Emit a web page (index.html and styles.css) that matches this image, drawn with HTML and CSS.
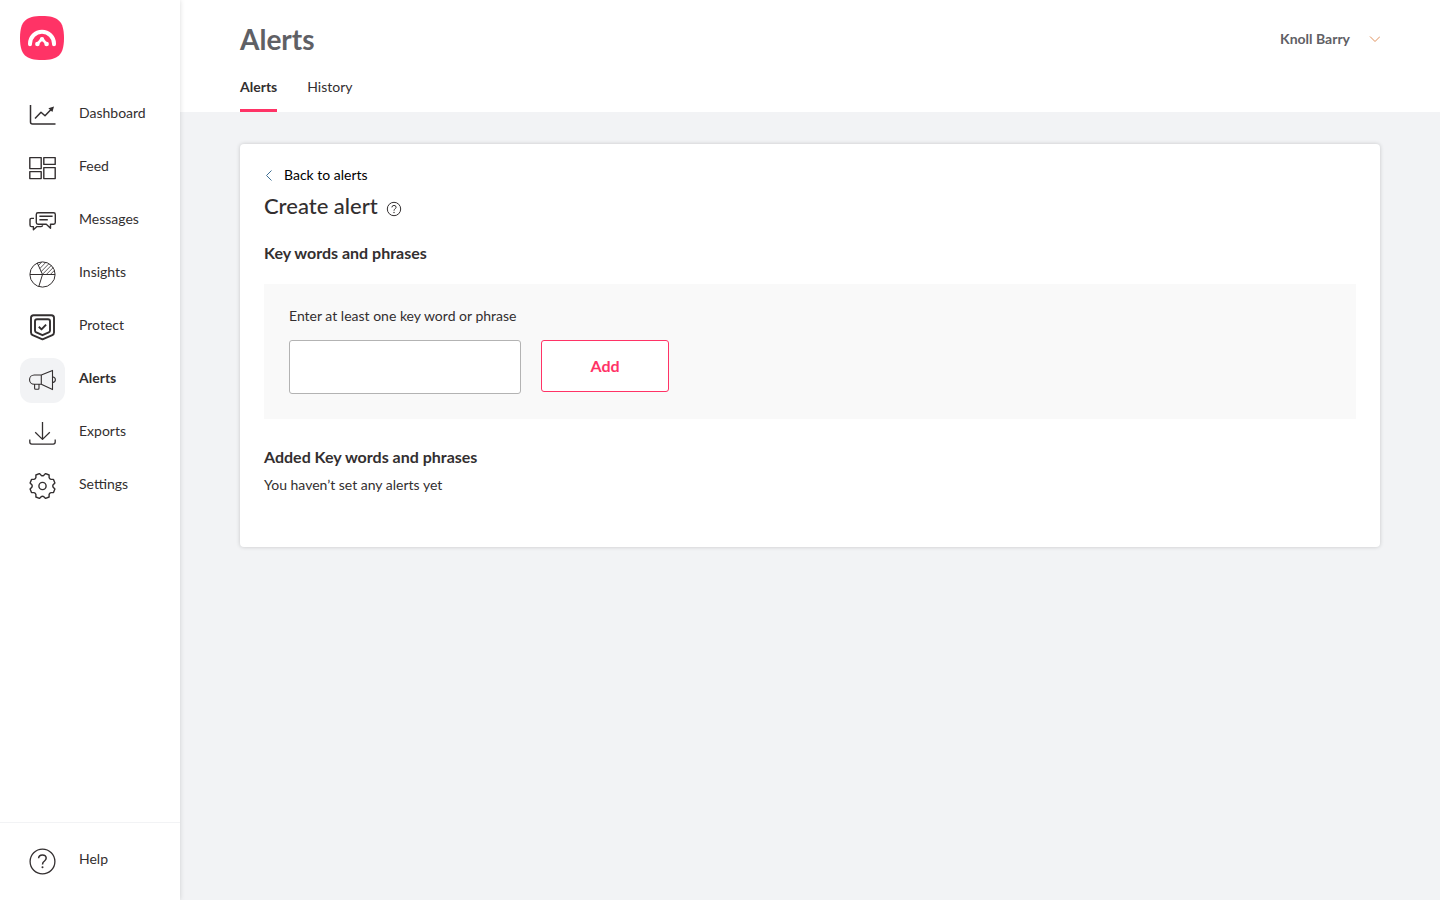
FILE: index.html
```html
<!DOCTYPE html>
<html lang="en">

<head>
    <meta charset="utf-8">
    <meta name="viewport" content="width=device-width, initial-scale=1">
    <title>Alerts</title>
    <link rel="stylesheet" href="styles.css">
</head>

<body>
<aside class="sidebar">
    <a class="logo" href="#" aria-label="Home">
        <svg width="44" height="44" viewBox="0 0 44 44">
            <path fill="#ff3366" d="M22 0C38 0 44 5 44 22S38 44 22 44 0 39 0 22 6 0 22 0z"/>
            <g fill="none" stroke="#fff" stroke-linecap="round" stroke-linejoin="round">
                <path stroke-width="4" d="M10 28.3v-.6a12 12 0 0 1 24 0v.6"/>
                <path stroke-width="2.6" d="M17.4 27.8l4.6-5 4.6 5"/>
            </g>
            <g fill="#fff">
                <circle cx="17.4" cy="28" r="2.3"/>
                <circle cx="26.6" cy="28" r="2.3"/>
                <circle cx="22" cy="23.2" r="2.2"/>
            </g>
        </svg>
    </a>
    <nav class="nav">
        <a class="nav-item" href="#">
            <span class="nav-icon">
                <svg width="27" height="27" viewBox="0 0 27 27">
                    <path stroke-width="1.5" d="M1.5 3v17q0 2 2 2h23"/>
                    <path stroke-width="1.5" d="M6 16.5l6-6.3 4 3.5 6.5-6.8"/>
                    <path class="solid" d="M25 4.6l-5.6 1.6 4 3.8z"/>
                </svg>
            </span>
            <span class="nav-label">Dashboard</span>
        </a>
        <a class="nav-item" href="#">
            <span class="nav-icon">
                <svg width="27" height="27" viewBox="0 0 27 27">
                    <path stroke-width="1.4" d="M.8 2.6h11.4v11H.8zM14.8 2.6h11.4v6.8H14.8zM.8 16.6h11.4v7H.8zM14.8 12.6h11.4v11H14.8z"/>
                </svg>
            </span>
            <span class="nav-label">Feed</span>
        </a>
        <a class="nav-item" href="#">
            <span class="nav-icon">
                <svg width="27" height="27" viewBox="0 0 27 27">
                    <g stroke-width="1.4">
                        <path d="M9 4.7h15.6q1.7 0 1.7 1.7v8.2q0 1.7-1.7 1.7h-3.1v3.9l-4.2-3.9H9q-1.7 0-1.7-1.7V6.4q0-1.7 1.7-1.7z"/>
                        <path d="M10.4 8.3h13.2M10.4 11.8h8.4"/>
                        <path d="M5 10.4H2.4Q1 10.4 1 12v5q0 1.6 1.4 1.6h2v3.2l3.6-3.2h4q1.5 0 1.6-1.4"/>
                    </g>
                </svg>
            </span>
            <span class="nav-label">Messages</span>
        </a>
        <a class="nav-item" href="#">
            <span class="nav-icon">
                <svg width="27" height="27" viewBox="0 0 27 27">
                    <circle cx="13.5" cy="13.5" r="12.6"/>
                    <path d="M1 13.5h25M13.5 13.5L8.3 2M13.5 13.5L9.8 25.5"/>
                    <path stroke-width=".8" d="M9.2 4.8L12.6 1.2M10.6 7.8l6-6.2M12 10.8l7.8-8M13.4 13.4l9.2-9.3M17.4 13.4l7-7M21.4 13.4l4-4"/>
                </svg>
            </span>
            <span class="nav-label">Insights</span>
        </a>
        <a class="nav-item" href="#">
            <span class="nav-icon">
                <svg width="27" height="27" viewBox="0 0 27 27">
                    <g stroke-width="1.9">
                        <path d="M4.6 1.2h17.8Q25 1.2 25 3.8v14.8q0 1.8-1.7 2.5l-9.8 4.3-9.8-4.3Q2 20.4 2 18.6V3.8Q2 1.2 4.6 1.2z"/>
                        <path d="M8 5.2h11q2 0 2 2v9.2q0 1.4-1.3 2l-6.2 2.8-6.2-2.8Q6 17.8 6 16.4V7.2q0-2 2-2z"/>
                        <path d="M9.8 12.8l2.7 2.6 4.6-4.7"/>
                    </g>
                </svg>
            </span>
            <span class="nav-label">Protect</span>
        </a>
        <a class="nav-item active" href="#" aria-current="page">
            <span class="nav-icon">
                <svg width="27" height="27" viewBox="0 0 27 27">
                    <path stroke-width="1.1" d="M12.300 8H5.200a4.600 4.600 0 0 0 0 9.300h7.100zL23.500 3.400v19.200l-11.200-5.300M23.500 9.800q2.900.6 2.900 2.900t-2.900 2.900M5.600 17.400v3.800q0 1 1 1H9q1 0 1-1v-3.800"/>
                </svg>
            </span>
            <span class="nav-label">Alerts</span>
        </a>
        <a class="nav-item" href="#">
            <span class="nav-icon">
                <svg width="27" height="27" viewBox="0 0 27 27">
                    <path stroke-width="1.3" d="M13.500 2v17.400M6.200 12.300l7.300 7.100 7.300-7.100M.8 19.600v2.500q0 2 2 2h21.400q2 0 2-2v-2.500"/>
                </svg>
            </span>
            <span class="nav-label">Exports</span>
        </a>
        <a class="nav-item" href="#">
            <span class="nav-icon">
                <svg width="27" height="27" viewBox="0 0 27 27">
                    <g transform="translate(13.5 13)" stroke-width="1.4">
                        <path d="M10.700 1.300L12.400 3.100 11 6.600 8.500 6.600Q7 7 6.600 8.500L6.600 11 3.100 12.400 1.300 10.700Q0 9.900-1.300 10.700L-3.100 12.400-6.600 11-6.600 8.500Q-7 7-8.500 6.600L-11 6.600-12.400 3.100-10.700 1.300Q-9.900 0-10.700-1.300L-12.400-3.100-11-6.600-8.500-6.600Q-7-7-6.600-8.500L-6.600-11-3.100-12.400-1.300-10.700Q0-9.900 1.300-10.700L3.100-12.400 6.600-11 6.600-8.500Q7-7 8.500-6.600L11-6.600 12.400-3.100 10.700-1.300Q9.900 0 10.700 1.300z"/>
                        <circle r="3.6"/>
                    </g>
                </svg>
            </span>
            <span class="nav-label">Settings</span>
        </a>
    </nav>
    <div class="sidebar-footer">
        <a class="nav-item" href="#">
            <span class="nav-icon">
                <svg width="27" height="27" viewBox="0 0 27 27">
                    <circle cx="13.5" cy="13.5" r="12.4" stroke-width="1.3"/>
                    <path stroke-width="1.5" d="M9.600 10.300q.2-3.300 3.800-3.300t3.800 3.100q0 1.500-1.700 2.900-2 1.500-2 3.400"/>
                    <circle class="solid" cx="13.5" cy="19.3" r="1"/>
                </svg>
            </span>
            <span class="nav-label">Help</span>
        </a>
    </div>
</aside>

<div class="page">
    <header class="header">
        <div class="header-top">
            <h1>Alerts</h1>
            <button class="user" type="button">
                Knoll Barry
                <svg width="12" height="8" viewBox="0 0 12 8">
                    <path d="M2 1.500l5 5 5-5"/>
                </svg>
            </button>
        </div>
        <nav class="tabs">
            <a class="tab active" href="#">Alerts</a>
            <a class="tab" href="#">History</a>
        </nav>
    </header>

    <main class="content">
        <div class="card">
            <a class="back" href="#">
                <svg width="10" height="12" viewBox="0 0 10 12">
                    <path d="M7.500 1.500l-5 5 5 5"/>
                </svg>
                Back to alerts
            </a>
            <div class="card-title">
                <h2>Create alert</h2>
                <button class="hint" type="button" aria-label="Help">
                    <svg width="16" height="16" viewBox="0 0 16 16">
                        <circle cx="8" cy="8" r="6.7"/>
                        <path d="M5.900 6.400q.1-2 2.100-2t2.100 1.800q0 .9-1 1.600T8 9.700"/>
                        <circle class="solid" cx="8" cy="11.5" r=".7"/>
                    </svg>
                </button>
            </div>

            <h3>Key words and phrases</h3>
            <form class="panel">
                <label for="keyword">Enter at least one key word or phrase</label>
                <div class="row">
                    <input id="keyword" name="keyword" type="text">
                    <button class="add" type="button">Add</button>
                </div>
            </form>

            <h3>Added Key words and phrases</h3>
            <p class="empty">You haven’t set any alerts yet</p>
        </div>
    </main>
</div>
</body>

</html>
```
FILE: styles.css
```css
* {
    box-sizing: border-box;
}

body {
    display: flex;
    min-height: 100vh;
    margin: 0;
    background: #f2f3f5;
    color: #332f30;
    font-family: Lato, "Open Sans", sans-serif;
    font-size: 14px;
    line-height: 20px;
}

a {
    color: inherit;
    text-decoration: none;
}

h1,
h2,
h3,
p {
    margin: 0;
}

button {
    padding: 0;
    border: 0;
    background: none;
    font: inherit;
    cursor: pointer;
}

svg {
    display: block;
    fill: none;
    stroke: #332f30;
    stroke-linejoin: round;
}

.solid {
    fill: #332f30;
    stroke: none;
}

.sidebar {
    z-index: 1;
    display: flex;
    flex: none;
    flex-direction: column;
    width: 180px;
    background: #fff;
    box-shadow: 0 0 5px rgba(0, 0, 0, 0.15);
}

.logo {
    padding: 16px 20px 33px;
}

.logo svg {
    stroke: none;
}

.nav {
    display: flex;
    flex: 1;
    flex-direction: column;
    gap: 8px;
}

.nav-item {
    display: flex;
    align-items: center;
    gap: 14px;
    padding: 0 20px;
}

.nav-icon {
    padding: 9px;
    border-radius: 12px;
}

.nav-label {
    padding-bottom: 5px;
}

.nav-item.active {
    font-weight: 700;
}

.nav-item.active .nav-icon {
    background: #f2f3f5;
}

.sidebar-footer {
    padding: 16px 0;
    border-top: 1px solid #f2f3f5;
}

.page {
    flex: 1;
    min-width: 0;
}

.header {
    padding: 19px 60px 0;
    background: #fff;
}

.header-top {
    display: flex;
    align-items: center;
    justify-content: space-between;
}

h1 {
    color: #5f6065;
    font-size: 28px;
    line-height: 40px;
}

.user {
    display: flex;
    align-items: center;
    gap: 18px;
    color: #5f6065;
    font-weight: 700;
}

.user path {
    stroke: #e0905c;
}

.tabs {
    display: flex;
    gap: 30px;
    margin-top: 18px;
}

.tab {
    height: 35px;
    border-bottom: 3px solid transparent;
}

.tab.active {
    border-color: #ff3366;
    font-weight: 700;
}

.content {
    padding: 32px 60px;
}

.card {
    padding: 21px 24px 52px;
    border-radius: 4px;
    background: #fff;
    box-shadow: 0 0 4px rgba(0, 0, 0, 0.18);
}

.back {
    display: inline-flex;
    align-items: center;
    gap: 10px;
    color: #000;
}

.back svg {
    stroke: #3f6f94;
}

.card-title {
    display: flex;
    align-items: center;
    gap: 8px;
    margin-bottom: 17px;
}

h2 {
    font-size: 22px;
    font-weight: 500;
    line-height: 40px;
}

.hint {
    padding-top: 6px;
}

h3 {
    font-size: 16px;
    line-height: 20px;
}

.panel {
    margin: 21px 0 28px;
    padding: 22px 25px 25px;
    background: #f9f9f9;
}

.panel label {
    display: block;
    margin-bottom: 14px;
}

.row {
    display: flex;
    align-items: flex-start;
    gap: 20px;
}

.row input {
    width: 232px;
    height: 54px;
    padding: 0 16px;
    border: 1px solid #b3b3b3;
    border-radius: 3px;
    background: #fff;
    font: inherit;
}

.add {
    width: 128px;
    height: 52px;
    border: 1px solid #ff3366;
    border-radius: 3px;
    background: #fff;
    color: #ff3366;
    font-size: 16px;
    font-weight: 700;
}

.empty {
    margin-top: 8px;
}
```
